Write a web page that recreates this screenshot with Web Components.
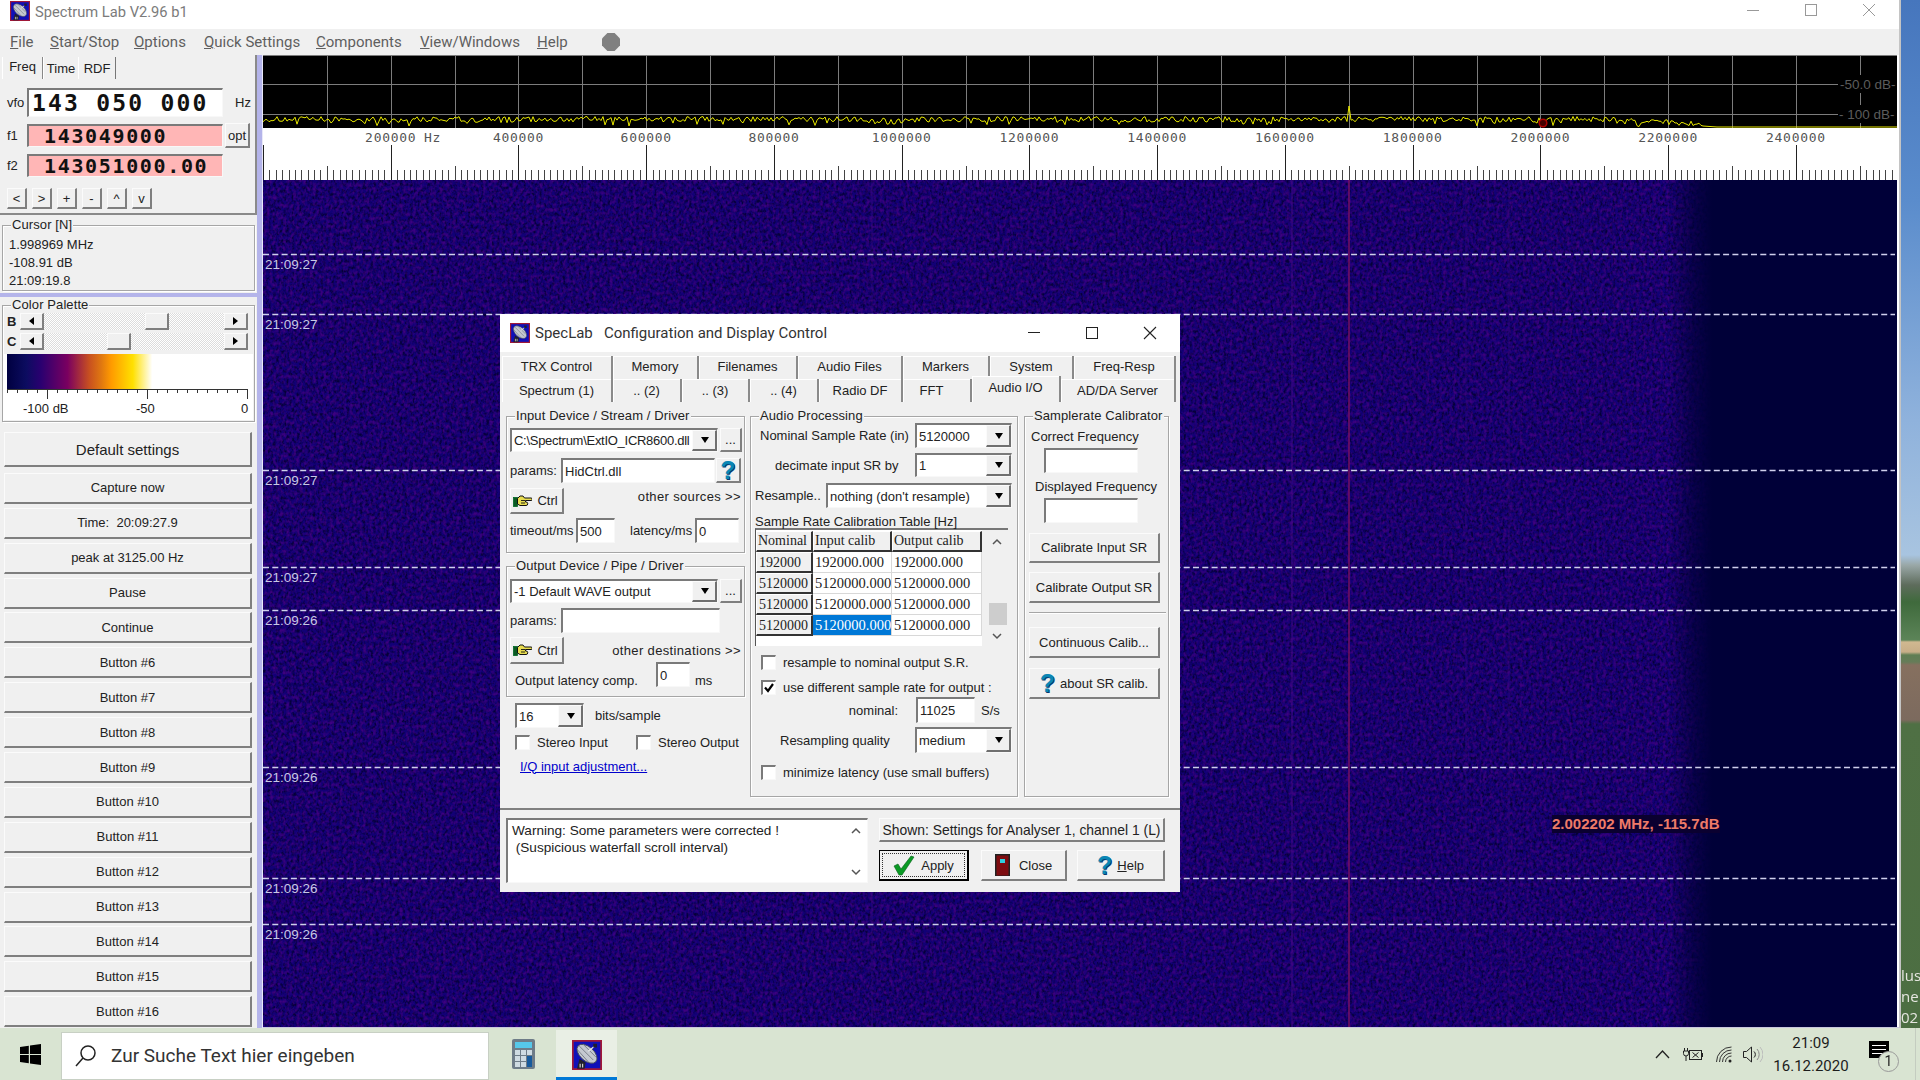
<!DOCTYPE html>
<html>
<head>
<meta charset="utf-8">
<title>Spectrum Lab</title>
<style>
  html, body { margin: 0; padding: 0; width: 1920px; height: 1080px; overflow: hidden; background: #000; }
</style>
</head>
<body>
<sl-app></sl-app>
<script>
'use strict';

(function() {
  const SANS = `'Liberation Sans', Arial, sans-serif`;
  const SEGOE = `Roboto, 'Noto Sans', sans-serif`;

  // shared bits for the shadow roots that hold lots of loose rows
  const ui = `
    * { box-sizing: border-box; }
    .row { display: flex; align-items: center; white-space: nowrap; }
    .push { margin-left: auto; }
    .q { font: bold 25px/22px ${SANS}; color: #0a86b4; text-shadow: 1px 1px 0 #063a70; }
  `;

  const APP_ICON = `<svg viewBox="0 0 24 24" width="100%" height="100%" style="display:block">
    <rect x=".7" y=".7" width="22.6" height="22.6" fill="#1010b8" stroke="#a01838" stroke-width="1.4"/>
    <ellipse cx="12" cy="11" rx="9.500" ry="5.600" transform="rotate(42 12 11)" fill="#c4c8d0" stroke="#444a58" stroke-width=".7"/>
    <path d="M6 5l11 11M4.500 8l9 10M9 3.500l10 10" stroke="#7c828c" stroke-width=".8"/>
    <path d="M13 9l5-4" stroke="#e8e8e8" stroke-width="1"/>
    <rect x="17" y="3" width="3" height="3" fill="#20202c"/>
    <path d="M6 15l-2 8h6l1-5z" fill="#20202c"/>
    <path d="M6.500 19v3M8.500 19v3" stroke="#d8d8d8" stroke-width=".9"/>
  </svg>`;

  const HAND = `<svg width="19" height="12" viewBox="0 0 19 12" style="margin-left:-2px">
    <rect x=".5" y="2.500" width="4" height="9" fill="#0a5a24" stroke="#062" stroke-width=".8"/>
    <path d="M4.500 3.500L7 1h3l1.500 2H18a1 1 0 0 1 0 2.500h-5.500V7h.5a1 1 0 0 1 0 3.500H7L4.500 9z" fill="#e8dc50" stroke="#111" stroke-width="1"/>
    <path d="M8 5.500h4M8 8h4" stroke="#111" stroke-width=".9"/>
  </svg>`;

  class SlBase extends HTMLElement {
    constructor() {
      super();
      this.attachShadow({ mode: 'open' }).innerHTML = this.render();
    }
  }

  // raised windows button
  class SlBtn extends SlBase {
    render() {
      return `<style>
        :host { display: inline-flex; align-items: center; justify-content: center; gap: 5px; box-sizing: border-box;
          background: #f0f0f0; border: solid; border-width: 1px 2px 2px 1px; border-color: #fbfbfb #7f7f7f #7f7f7f #fbfbfb;
          font: 13px ${SANS}; color: #222; white-space: nowrap; flex: none; }
      </style><slot></slot>`;
    }
  }

  // sunken white edit field
  class SlField extends SlBase {
    render() {
      return `<style>
        :host { display: inline-flex; align-items: center; box-sizing: border-box; background: #fff; flex: none;
          border: solid; border-width: 2px 1px 1px 2px; border-color: #7a7a7a #f8f8f8 #f8f8f8 #7a7a7a;
          padding-left: 2px; font: 13px ${SANS}; color: #222; white-space: nowrap; overflow: hidden; }
      </style><slot></slot>`;
    }
  }

  class SlCombo extends SlBase {
    render() {
      return `<style>
        :host { display: inline-flex; align-items: stretch; box-sizing: border-box; background: #fff; flex: none;
          border: solid; border-width: 2px 1px 1px 2px; border-color: #7a7a7a #f8f8f8 #f8f8f8 #7a7a7a;
          font: 13px ${SANS}; color: #222; white-space: nowrap; overflow: hidden; }
        .t { flex: 1; min-width: 0; overflow: hidden; align-self: center; padding-left: 2px; }
        .b { width: 20px; flex: none; background: #f0f0f0; border: solid; border-width: 1px 2px 2px 1px; padding-left: 2px;
          border-color: #fbfbfb #6f6f6f #6f6f6f #fbfbfb; display: flex; align-items: center; justify-content: center; }
        .b::after { content: ''; border: 4.5px solid transparent; border-top: 6px solid #000; border-bottom: 0; }
      </style><div class="t"><slot></slot></div><div class="b"></div>`;
    }
  }

  class SlCheck extends SlBase {
    render() {
      const on = this.hasAttribute('checked');
      return `<style>
        :host { display: inline-flex; align-items: center; gap: 7px; font: 13px ${SANS}; color: #222; white-space: nowrap; flex: none; }
        .box { width: 15px; height: 15px; flex: none; box-sizing: border-box; background: #fff;
          border: solid; border-width: 2px 1px 1px 2px; border-color: #7a7a7a #f8f8f8 #f8f8f8 #7a7a7a; }
        svg { display: block; }
      </style><div class="box">${on ? '<svg width="12" height="12" viewBox="0 0 12 12"><path d="M2 5.500l3 3.500 5-7" fill="none" stroke="#000" stroke-width="2.200"/></svg>' : ''}</div><slot></slot>`;
    }
  }

  // etched group box, the legend sits on the top edge
  class SlGroup extends SlBase {
    render() {
      return `<style>
        :host { display: block; position: relative; box-sizing: border-box; border: 1px solid #a6a6a6;
          box-shadow: inset 1px 1px 0 #fff, 1px 1px 0 #fff; font: 13px ${SANS}; color: #222; }
        .legend { position: absolute; top: -9px; left: 8px; padding: 0 1px; background: #f0f0f0; line-height: 16px; white-space: nowrap; letter-spacing: .1px; }
      </style><div class="legend"><slot name="legend"></slot></div><slot></slot>`;
    }
  }

  class SlScroll extends SlBase {
    render() {
      return `<style>
        :host { display: flex; height: 17px; flex: none; box-sizing: border-box; }
        .a { width: 21px; flex: none; background: #f0f0f0; border: solid; border-width: 1px 2px 2px 1px;
          border-color: #fbfbfb #7f7f7f #7f7f7f #fbfbfb; display: flex; align-items: center; justify-content: center; }
        .l::after { content: ''; border: 4px solid transparent; border-right: 5px solid #000; border-left: 0; }
        .r::after { content: ''; border: 4px solid transparent; border-left: 5px solid #000; border-right: 0; }
        .track { flex: 1; background: repeating-conic-gradient(#fff 0 25%, #dcdcdc 0 50%) 0 0 / 2px 2px; display: flex; }
        .gap { flex: none; width: var(--pos, 0); }
        .thumb { width: 21px; background: #f0f0f0; border: solid; border-width: 1px 2px 2px 1px; border-color: #fbfbfb #7f7f7f #7f7f7f #fbfbfb; }
      </style><div class="a l"></div><div class="track"><div class="gap"></div><div class="thumb"></div></div><div class="a r"></div>`;
    }
  }

  class SlTitle extends SlBase {
    render() {
      return `<style>
        :host { display: flex; align-items: center; height: 29px; background: #fff; flex: none; }
        .icon { width: 20px; height: 20px; margin: -8px 0 0 10px; }
        .txt { margin: -6px 0 0 5px; font: 14.700px ${SEGOE}; color: #7b7b7b; }
        .ctl { margin: -9px 0 0 auto; display: flex; }
        .ctl div { width: 58px; display: flex; justify-content: center; }
      </style>
      <div class="icon">${APP_ICON}</div>
      <div class="txt">Spectrum Lab V2.96 b1</div>
      <div class="ctl">
        <div><svg width="14" height="14"><path d="M1 7.500h12" stroke="#999"/></svg></div>
        <div><svg width="14" height="14"><rect x="1.500" y="1.500" width="11" height="11" fill="none" stroke="#999"/></svg></div>
        <div style="margin-right:1px"><svg width="14" height="14"><path d="M1 1l12 12M13 1L1 13" stroke="#999"/></svg></div>
      </div>`;
    }
  }

  class SlMenu extends SlBase {
    render() {
      const items = [['F', 'ile', 40], ['S', 'tart/Stop', 84], ['O', 'ptions', 70], ['Q', 'uick Settings', 112], ['C', 'omponents', 104], ['V', 'iew/Windows', 117], ['H', 'elp', 65]];
      return `<style>
        :host { display: flex; align-items: center; height: 26px; background: #f0f0f0; padding-left: 10px; flex: none;
          font: 15px ${SEGOE}; color: #5f5f5f; }
        span { display: block; white-space: nowrap; flex: none; }
        .dot { width: 18px; height: 18px; background: #808080; clip-path: polygon(30% 0, 70% 0, 100% 30%, 100% 70%, 70% 100%, 30% 100%, 0 70%, 0 30%); }
      </style>
      ${items.map(i => `<span style="width:${i[2]}px"><u>${i[0]}</u>${i[1]}</span>`).join('')}
      <div class="dot"></div>`;
    }
  }

  class SlSidePanel extends SlBase {
    render() {
      const labels = ['Capture now', 'Time:&nbsp; 20:09:27.9', 'peak at 3125.00 Hz', 'Pause', 'Continue'];
      for (let i = 6; i <= 16; i++) labels.push('Button #' + i);
      const small = ['&lt;', '&gt;', '+', '-', '^', 'v'];
      let ticks = '<path d="M7 .500H248" stroke="#333"/>';
      for (let x = 0; x <= 240; x += 10) {
        ticks += `<path d="M${x + 7.5} 0v4" stroke="#333"/>`;
      }
      [47.500, 147.500, 247.500].forEach(p => { ticks += `<path d="M${p} 0v10" stroke="#333"/>`; });
      return `<style>
        ${ui}
        :host { display: flex; flex-direction: column; width: 257px; flex: none; background: #f0f0f0; font: 13px ${SANS}; color: #222; }
        .freq { height: 160px; border: solid; border-width: 0 2px 2px 0; border-color: #8a8a8a; flex: none; }
        .tabs { display: flex; height: 24px; padding: 2px 0 0 3px; align-items: stretch; }
        .tab { padding-top: 4px; text-align: center; border-right: 1px solid #777; box-shadow: -1px 0 0 #fff; }
        .tab.on { padding-top: 2px; background: #f0f0f0; border-right: 2px solid #888; }
        .lbl { width: 27px; padding-left: 7px; flex: none; }
        .mono { font-family: 'DejaVu Sans Mono', monospace; font-weight: bold; color: #111; }
        .big { font-size: 23px; letter-spacing: 2.200px; }
        .pink { background: #ffb6b6; font-size: 20px; letter-spacing: 1.650px; padding-left: 15px; }
        .small { width: 20px; height: 21px; margin-right: 5px; font-size: 13px; }
        .lines { padding: 10px 0 0 6px; line-height: 18px; }
        .split { height: 4px; margin-top: 2px; background: #b4b4ea; flex: none; }
        .bar { margin-top: 3px; padding-left: 4px; }
        .bar b { width: 13px; flex: none; }
        .bar sl-scroll { width: 228px; }
        .scale { margin: 4px 1px 0; background: #fff; height: 66px; }
        .grad { margin-left: 3px; width: 242px; height: 35px; background: linear-gradient(90deg, #000040 0, #0c0c60 8%, #2a0070 14%, #7a0060 25%, #c85020 34%, #e07810 39%, #ff9a00 43%, #ffe000 52%, #fff 60%); }
        svg { display: block; }
        .stack { display: flex; flex-direction: column; gap: 3.900px; margin: 10px 0 0 4px; }
        .stack sl-btn { width: 248px; height: 31px; }
      </style>
      <div class="freq">
        <div class="tabs">
          <div class="tab on" style="width:41px">Freq</div>
          <div class="tab" style="width:35px">Time</div>
          <div class="tab" style="width:37px">RDF</div>
        </div>
        <div class="row" style="height:29px;margin-top:9px">
          <div class="lbl">vfo</div>
          <sl-field class="mono big" style="width:196px;height:29px;padding-left:3px">143 050 000</sl-field>
          <span style="margin-left:12px">Hz</span>
        </div>
        <div class="row" style="height:23px;margin-top:7px">
          <div class="lbl">f1</div>
          <sl-field class="mono pink" style="width:196px;height:23px">143049000</sl-field>
          <sl-btn style="width:25px;height:25px;margin-left:2px">opt</sl-btn>
        </div>
        <div class="row" style="height:23px;margin-top:7px">
          <div class="lbl">f2</div>
          <sl-field class="mono pink" style="width:196px;height:23px">143051000.00</sl-field>
        </div>
        <div class="row" style="margin:11px 0 0 7px">
          ${small.map(s => `<sl-btn class="small">${s}</sl-btn>`).join('')}
        </div>
      </div>
      <sl-group style="margin:10px 0 0 2px;width:253px;height:66px">
        <span slot="legend">Cursor [N]</span>
        <div class="lines">1.998969 MHz<br>-108.91 dB<br>21:09:19.8</div>
      </sl-group>
      <div class="split"></div>
      <sl-group style="margin:8px 0 0 2px;width:253px;height:117px">
        <span slot="legend">Color Palette</span>
        <div class="row bar" style="margin-top:7px"><b>B</b><sl-scroll style="--pos:101px"></sl-scroll></div>
        <div class="row bar"><b>C</b><sl-scroll style="--pos:63px"></sl-scroll></div>
        <div class="scale">
          <div class="grad"></div>
          <svg width="249" height="31" style="margin-left:-4px">
            ${ticks}
            <g font-family="${SANS.replace(/'/g, '')}" font-size="13" fill="#222">
              <text x="23" y="24">-100 dB</text>
              <text x="136" y="24">-50</text>
              <text x="241" y="24">0</text>
            </g>
          </svg>
        </div>
      </sl-group>
      <div class="stack">
        <sl-btn style="height:35px;font-size:15px;margin-bottom:2px">Default settings</sl-btn>
        ${labels.map(l => `<sl-btn>${l}</sl-btn>`).join('')}
      </div>`;
    }
  }

  const HZ = 63.87;
  const SPEC_LEFT = 263;

  class SlSpectrum extends SlBase {
    render() {
      let seed = 1234;
      const rnd = () => { seed = (seed * 16807) % 2147483647; return seed / 2147483647; };
      let grid = '';
      for (let i = 1; i <= 25; i++) {
        const x = Math.round(SPEC_LEFT + i * HZ) + 0.5;
        grid += `<path d="M${x} 55v73" stroke="#7c7c7c"/>`;
      }
      let pts = '';
      for (let x = SPEC_LEFT; x < 1705; x += 2) {
        let y = 122 - rnd() * 5.500 + (rnd() < 0.12 ? 4 : 0);
        if (x > 1600) y += (x - 1600) * 0.045;
        if (x === 1349) y = 106;
        pts += `${x},${y.toFixed(1)} `;
      }
      pts += '1717,127 1897,127';
      return `<style>
        :host { display: block; height: 73px; flex: none; }
        svg { display: block; }
      </style>
      <svg width="1634" height="73" viewBox="263 55 1634 73">
        <rect x="263" y="55" width="1634" height="73" fill="#000"/>
        ${grid}
        <path d="M263 55.500h1634M263 84.500h1634M263 114.500h1634" stroke="#7c7c7c"/>
        <rect x="1838" y="75" width="59" height="18" fill="#000"/>
        <rect x="1838" y="105" width="59" height="18" fill="#000"/>
        <g font-family="Liberation Sans, sans-serif" font-size="13.500" fill="#5c5c5c">
          <text x="1840" y="89">-50.0 dB-</text>
          <text x="1839" y="119">- 100 dB-</text>
        </g>
        <polyline points="${pts}" fill="none" stroke="#e6e600" stroke-width="1"/>
        <circle cx="1543" cy="123" r="3.800" fill="#400" stroke="#b00000" stroke-width="1.500"/>
      </svg>`;
    }
  }

  class SlScale extends SlBase {
    render() {
      let ticks = '';
      for (let i = 0; i <= 255; i++) {
        const x = Math.round(SPEC_LEFT + i * HZ / 10) + 0.5;
        if (x > 1893) break;
        const top = i % 20 === 0 ? 145 : i % 10 === 0 ? 166 : 170;
        ticks += `<path d="M${x} ${top}V180" stroke="${i % 20 === 0 ? '#222' : '#444'}"/>`;
      }
      let labels = '';
      for (let i = 1; i <= 12; i++) {
        const x = SPEC_LEFT + i * 2 * HZ;
        labels += `<text x="${x.toFixed(1)}" y="142" text-anchor="middle">${i * 200000}</text>`;
      }
      return `<style>
        :host { display: block; height: 52px; flex: none; }
        svg { display: block; }
      </style>
      <svg width="1634" height="52" viewBox="263 128 1634 52">
        <rect x="263" y="128" width="1634" height="52" fill="#fff"/>
        ${ticks}
        <g font-family="DejaVu Sans Mono, monospace" font-size="13" letter-spacing=".7" fill="#555">
          ${labels}
          <text x="424" y="142">Hz</text>
        </g>
      </svg>`;
    }
  }

  class SlWaterfall extends SlBase {
    render() {
      const lines = [[254, '27'], [314, '27'], [470, '27'], [567, '27'], [610, '26'], [767, '26'], [878, '26'], [924, '26']];
      const streaks = [[1349, '#7a1060', .9, 1.6], [1292, '#4a0a88', .6, 1.4], [872, '#3c0a80', .45, 1.4], [1466, '#340a80', .4, 1.4], [1509, '#3c0a80', .4, 1.4], [1130, '#2a0878', .3, 1.4], [640, '#2a0878', .3, 1.4]];
      return `<style>
        :host { display: block; flex: 1; min-height: 0; border-bottom: 1px solid #c8c8dc; }
        svg { display: block; }
      </style>
      <svg width="1634" height="847" viewBox="263 180 1634 847">
        <defs>
          <filter id="dark" x="0" y="0" width="100%" height="100%" color-interpolation-filters="sRGB">
            <feTurbulence type="fractalNoise" baseFrequency=".38 .3" numOctaves="2" seed="4"/>
            <feColorMatrix values="0 0 0 0 .02  0 0 0 0 0  0 0 0 0 .22  2.800 0 0 0 -1.150"/>
          </filter>
          <filter id="warm" x="0" y="0" width="100%" height="100%" color-interpolation-filters="sRGB">
            <feTurbulence type="fractalNoise" baseFrequency=".3 .24" numOctaves="2" seed="9"/>
            <feColorMatrix values="0 0 0 0 .24  0 0 0 0 0  0 0 0 0 .5  0 2.600 0 0 -1.100"/>
          </filter>
          <linearGradient id="edge" x1="1668" x2="1712" y1="0" y2="0" gradientUnits="userSpaceOnUse">
            <stop offset="0" stop-color="#000038" stop-opacity="0"/>
            <stop offset=".6" stop-color="#000038" stop-opacity=".7"/>
            <stop offset="1" stop-color="#000038"/>
          </linearGradient>
        </defs>
        <rect x="263" y="180" width="1634" height="847" fill="#120076"/>
        <rect x="263" y="180" width="1634" height="847" filter="url(#dark)"/>
        <rect x="263" y="180" width="1634" height="847" filter="url(#warm)"/>
        ${streaks.map(s => `<path d="M${s[0]} 180v847" stroke="${s[1]}" stroke-opacity="${s[2]}" stroke-width="${s[3]}"/>`).join('')}
        <rect x="1668" y="180" width="229" height="847" fill="url(#edge)"/>
        <g stroke="#cfcfec" stroke-width="1.500" stroke-dasharray="6 3.300">
          ${lines.map(l => `<path d="M263 ${l[0] + 0.5}H1895"/>`).join('')}
        </g>
        <g font-family="Liberation Sans, sans-serif" font-size="13.500" fill="#c8c8e6">
          ${lines.map(l => `<text x="265" y="${l[0] + 15}">21:09:${l[1]}</text>`).join('')}
        </g>
        <rect x="1552" y="815" width="168" height="18" fill="#0a0030"/>
        <text x="1552" y="829" font-family="Liberation Sans, sans-serif" font-weight="bold" font-size="15" fill="#ee7a68">2.002202 MHz, -115.7dB</text>
      </svg>`;
    }
  }

  class SlCalTable extends SlBase {
    render() {
      const rows = [['192000', '192000.000', '192000.000'], ['5120000', '5120000.000', '5120000.000'], ['5120000', '5120000.000', '5120000.000'], ['5120000', '5120000.000', '5120000.000']];
      return `<style>
        * { box-sizing: border-box; }
        :host { display: flex; width: 253px; height: 118px; flex: none; border-top: 2px solid #777; border-left: 1px solid #555;
          font: 14.500px 'Liberation Serif', serif; color: #222; background: #f0f0f0; }
        .grid { width: 226px; height: 116px; background: #fff; padding-top: 1px; display: grid; grid-template-columns: 57px 79px 90px; grid-auto-rows: 21px; align-content: start; }
        .c { overflow: hidden; white-space: nowrap; padding-left: 2px; line-height: 20px; border: solid; border-width: 0 1px 1px 0; border-color: #d8d8d8; }
        .h { background: #f0f0f0; border-color: #333; border-width: 1px 2px 2px 1px; border-top-color: #fff; border-left-color: #fff; line-height: 18px; font-size: 14px; padding-left: 1px; }
        .sel { background: #0078d7; color: #fff; }
        .sb { flex: 1; }
        .sb svg { display: block; margin: 8px 0 0 10px; }
        .th { width: 18px; height: 22px; margin: 57px 0 0 7px; background: #cdcdcd; }
      </style>
      <div class="grid">
        <div class="c h">Nominal</div><div class="c h">Input calib</div><div class="c h">Output calib</div>
        ${rows.map((r, i) => `<div class="c h" style="line-height:19px;padding-left:2px;font-size:14px">${r[0]}</div><div class="c${i === 3 ? ' sel' : ''}">${r[1]}</div><div class="c">${r[2]}</div>`).join('')}
      </div>
      <div class="sb">
        <svg width="10" height="8"><path d="M1 6l4-4 4 4" fill="none" stroke="#555" stroke-width="1.500"/></svg>
        <div class="th"></div>
        <svg width="10" height="8" style="margin-top:7px"><path d="M1 2l4 4 4-4" fill="none" stroke="#555" stroke-width="1.500"/></svg>
      </div>`;
    }
  }

  class SlDialog extends SlBase {
    render() {
      const tabs1 = [['TRX Control', 111], ['Memory', 86], ['Filenames', 99], ['Audio Files', 105], ['Markers', 87], ['System', 84], ['Freq-Resp', 102]];
      const tabs2 = [['Spectrum (1)', 111], ['.. (2)', 69], ['.. (3)', 68], ['.. (4)', 69], ['Radio DF', 84], ['<span style="margin-right:10px">FFT</span>', 69], ['Audio I/O', 89, 1], ['AD/DA Server', 115]];
      const tab = t => `<div class="tab${t[2] ? ' on' : ''}" style="width:${t[1]}px">${t[0]}</div>`;
      return `<style>
        ${ui}
        :host { position: absolute; left: 500px; top: 314px; width: 680px; height: 578px; display: flex; flex-direction: column;
          background: #f0f0f0; font: 13px ${SANS}; color: #222; }
        .title { height: 38px; background: #fff; display: flex; align-items: center; flex: none; padding-left: 10px; font: 15px ${SEGOE}; color: #333; }
        .title .i { width: 20px; height: 20px; margin-right: 5px; }
        .title pre { margin: 0; font: inherit; }
        .ctl { margin-left: auto; display: flex; }
        .ctl div { width: 58px; display: flex; justify-content: center; }
        .tabs { display: flex; padding-left: 2px; height: 23px; flex: none; align-items: flex-end; }
        .t1 { margin-top: 4px; height: 23px; }
        .t2 { height: 23px; }
        .tab { height: 100%; text-align: center; line-height: 23px; border-right: 2px solid #8a8a8a; box-shadow: inset 1px 1px 0 #fff; white-space: nowrap; }
        .t1 .tab { line-height: 22px; }
        .on { height: 26px; margin-top: -3px; line-height: 23px; background: #f0f0f0; position: relative; }
        .page { display: flex; height: 406px; flex: none; padding: 14px 0 0 6px; }
        .c1 { width: 239px; flex: none; }
        .c2 { width: 268px; margin-left: 5px; flex: none; }
        .c3 { width: 145px; margin-left: 6px; flex: none; }
        sl-group { width: 100%; }
        .pad { padding: 0 3px; }
        .link { color: #0000cc; text-decoration: underline; }
        .wide { letter-spacing: .35px; }
        .sep { height: 2px; background: #808080; flex: none; }
        .foot { display: flex; padding: 8px 0 0 6px; font-size: 13.600px; }
        .warn { position: relative; width: 362px; height: 65px; align-items: flex-start; flex-direction: column; display: flex; padding: 2px 0 0 4px; line-height: 17px; font-size: 13.600px; }
        .warn svg { position: absolute; right: 6px; }
        .r { width: 286px; margin-left: 11px; flex: none; }
        .apply { border-color: #000; padding: 2px; }
        .focus { display: flex; align-items: center; justify-content: center; gap: 6px; width: 100%; height: 100%; border: 1px dotted #333; }
      </style>
      <div class="title">
        <div class="i">${APP_ICON}</div>
        <pre>SpecLab   Configuration and Display Control</pre>
        <div class="ctl">
          <div><svg width="14" height="14"><path d="M1 6.500h12" stroke="#222"/></svg></div>
          <div><svg width="14" height="14"><rect x="1.500" y="1.500" width="11" height="11" fill="none" stroke="#222"/></svg></div>
          <div style="margin-right:1px"><svg width="14" height="14"><path d="M1 1l12 12M13 1L1 13" stroke="#222" stroke-width="1.100"/></svg></div>
        </div>
      </div>
      <div class="tabs t1">${tabs1.map(tab).join('')}</div>
      <div class="tabs t2">${tabs2.map(tab).join('')}</div>

      <div class="page">
        <div class="c1">
          <sl-group class="pad" style="height:137px">
            <span slot="legend">Input Device / Stream / Driver</span>
            <div class="row" style="margin-top:11px;height:24px;gap:2px">
              <sl-combo style="width:208px;height:24px;letter-spacing:-.28px">C:\\Spectrum\\ExtIO_ICR8600.dll</sl-combo>
              <sl-btn style="width:22px;height:24px">...</sl-btn>
            </div>
            <div class="row" style="margin-top:6px;height:25px">
              <span style="width:51px">params:</span>
              <sl-field style="width:154px;height:25px">HidCtrl.dll</sl-field>
              <sl-btn style="width:25px;height:25px;margin-left:1px"><span class="q">?</span></sl-btn>
            </div>
            <div class="row" style="margin-top:5px;height:26px">
              <sl-btn style="width:54px;height:26px">${HAND}Ctrl</sl-btn>
              <span class="push wide" style="margin-top:-10px">other sources &gt;&gt;</span>
            </div>
            <div class="row" style="margin-top:4px;height:25px">
              <span style="width:66px">timeout/ms</span>
              <sl-field style="width:39px;height:25px">500</sl-field>
              <span style="margin-left:15px;width:65px">latency/ms</span>
              <sl-field style="width:44px;height:25px">0</sl-field>
            </div>
          </sl-group>
          <sl-group class="pad" style="height:131px;margin-top:13px">
            <span slot="legend">Output Device / Pipe / Driver</span>
            <div class="row" style="margin-top:12px;height:24px;gap:2px">
              <sl-combo style="width:208px;height:24px">-1 Default WAVE output</sl-combo>
              <sl-btn style="width:22px;height:24px">...</sl-btn>
            </div>
            <div class="row" style="margin-top:5px;height:25px">
              <span style="width:51px">params:</span>
              <sl-field style="width:159px;height:25px"></sl-field>
            </div>
            <div class="row" style="margin-top:4px;height:25px;align-items:flex-start">
              <sl-btn style="width:54px;height:27px">${HAND}Ctrl</sl-btn>
              <span class="push wide" style="margin-top:6px">other destinations &gt;&gt;</span>
            </div>
            <div class="row" style="height:25px;padding-left:5px">
              <span style="width:141px;margin-top:11px">Output latency comp.</span>
              <sl-field style="width:34px;height:25px">0</sl-field>
              <span style="margin:11px 0 0 5px">ms</span>
            </div>
          </sl-group>
          <div class="row" style="margin:6px 0 0 9px;height:25px">
            <sl-combo style="width:69px;height:25px">16</sl-combo>
            <span style="margin-left:11px">bits/sample</span>
          </div>
          <div class="row" style="margin:7px 0 0 9px;height:15px">
            <sl-check style="width:121px">Stereo Input</sl-check>
            <sl-check>Stereo Output</sl-check>
          </div>
          <div class="row link" style="margin:8px 0 0 14px;height:16px">I/Q input adjustment...</div>
        </div>

        <div class="c2">
          <sl-group style="height:381px;padding-left:4px">
            <span slot="legend">Audio Processing</span>
            <div class="row" style="margin-top:6px;height:25px">
              <span style="width:160px;padding-left:5px">Nominal Sample Rate (in)</span>
              <sl-combo style="width:97px;height:25px">5120000</sl-combo>
            </div>
            <div class="row" style="margin-top:5px;height:24px">
              <span style="width:160px;padding-left:20px">decimate input SR by</span>
              <sl-combo style="width:97px;height:24px">1</sl-combo>
            </div>
            <div class="row" style="margin-top:6px;height:25px">
              <span style="width:71px">Resample..</span>
              <sl-combo style="width:186px;height:25px">nothing (don't resample)</sl-combo>
            </div>
            <div class="row" style="margin-top:5px;height:16px">Sample Rate Calibration Table [Hz]</div>
            <sl-cal-table style="margin-top:-1px"></sl-cal-table>
            <div class="row" style="margin:9px 0 0 6px;height:15px"><sl-check>resample to nominal output S.R.</sl-check></div>
            <div class="row" style="margin:10px 0 0 6px;height:15px"><sl-check checked>use different sample rate for output :</sl-check></div>
            <div class="row" style="margin-top:2px;height:26px">
              <span style="width:143px;text-align:right">nominal:</span>
              <sl-field style="width:59px;height:26px;margin-left:18px">11025</sl-field>
              <span style="margin-left:6px">S/s</span>
            </div>
            <div class="row" style="margin-top:4px;height:26px">
              <span style="width:160px;padding-left:25px">Resampling quality</span>
              <sl-combo style="width:97px;height:26px">medium</sl-combo>
            </div>
            <div class="row" style="margin:12px 0 0 6px;height:15px"><sl-check>minimize latency (use small buffers)</sl-check></div>
          </sl-group>
        </div>

        <div class="c3">
          <sl-group style="height:381px">
            <span slot="legend">Samplerate Calibrator</span>
            <div class="row" style="margin:11px 0 0 6px;height:16px">Correct Frequency</div>
            <sl-field style="display:flex;margin:4px 0 0 19px;width:94px;height:25px"></sl-field>
            <div class="row" style="margin:5px 0 0 10px;height:16px">Displayed Frequency</div>
            <sl-field style="display:flex;margin:4px 0 0 19px;width:94px;height:25px"></sl-field>
            <sl-btn style="display:flex;margin:10px 0 0 4px;width:131px;height:30px">Calibrate Input SR</sl-btn>
            <sl-btn style="display:flex;margin:9px 0 0 4px;width:131px;height:31px">Calibrate Output SR</sl-btn>
            <div style="margin:9px 2px 0 4px;height:2px;border-top:1px solid #a6a6a6;border-bottom:1px solid #fff"></div>
            <sl-btn style="display:flex;margin:13px 0 0 4px;width:131px;height:31px">Continuous Calib...</sl-btn>
            <sl-btn style="display:flex;margin:10px 0 0 4px;width:131px;height:31px"><span class="q">?</span>about SR calib.</sl-btn>
          </sl-group>
        </div>
      </div>

      <div class="sep"></div>
      <div class="foot">
        <sl-field class="warn">
          <span>Warning: Some parameters were corrected !</span>
          <span>&nbsp;(Suspicious waterfall scroll interval)</span>
          <svg width="10" height="8" style="top:7px"><path d="M1 6l4-4 4 4" fill="none" stroke="#555" stroke-width="1.500"/></svg>
          <svg width="10" height="8" style="top:48px"><path d="M1 2l4 4 4-4" fill="none" stroke="#555" stroke-width="1.500"/></svg>
        </sl-field>
        <div class="r">
          <sl-btn style="display:flex;width:286px;height:24px;font-size:13.900px">Shown: Settings for Analyser 1, channel 1 (L)</sl-btn>
          <div class="row" style="margin-top:8px">
            <sl-btn class="apply" style="width:90px;height:31px"><div class="focus">
              <svg width="22" height="21" viewBox="0 0 22 21"><path d="M1 11l4-2 3 5L18 1l3 1L9 20H6z" fill="#0a9a24" stroke="#06601a" stroke-width=".6"/></svg>Apply</div></sl-btn>
            <sl-btn style="width:86px;height:31px;margin-left:12px;gap:9px">
              <svg width="15" height="22" viewBox="0 0 15 22"><rect width="15" height="22" fill="#222"/><rect x="1.500" y="1.500" width="12" height="20" fill="#7e0c10"/><rect x="5" y="5" width="5" height="4" fill="#2fd0e0"/></svg>Close</sl-btn>
            <sl-btn style="width:88px;height:31px;margin-left:10px"><span class="q">?</span><span><u>H</u>elp</span></sl-btn>
          </div>
        </div>
      </div>`;
    }
  }

  class SlTaskbar extends SlBase {
    render() {
      return `<style>
        * { box-sizing: border-box; }
        :host { display: flex; align-items: center; height: 52px; flex: none; background: #d9e4d2; color: #1c1c1c; font: 15px ${SEGOE}; }
        svg { display: block; flex: none; }
        .start { width: 50px; padding-left: 20px; }
        .search { width: 428px; height: 48px; margin: 3px 0 0 11px; background: #fff; border: 1px solid #c8d0c4; display: flex; align-items: center; padding-left: 13px; font-size: 19px; color: #333; }
        .search svg { margin-right: 14px; }
        .calc { margin-left: 23px; }
        .app { width: 61px; height: 50px; margin: 2px 0 0 21px; background: #e9efe5; border-bottom: 3px solid #0078d7; display: flex; align-items: center; justify-content: center; }
        .app div { width: 30px; height: 30px; margin-top: 3px; }
        .tray { margin-left: auto; display: flex; align-items: center; height: 100%; padding-right: 14px; border-right: 1px solid #c4ccc0; margin-right: 4px; }
        .clock { width: 90px; margin: 2px 0 0 3px; text-align: center; line-height: 23px; font-size: 15px; }
        .note { position: relative; width: 32px; height: 36px; margin-left: 13px; }
        .note svg { position: absolute; left: 0; top: 5px; }
        .badge { position: absolute; left: 9px; top: 15px; width: 21px; height: 21px; border-radius: 50%; background: #d9e4d2; border: 1.500px solid #999; text-align: center; line-height: 18px; font-size: 14px; }
      </style>
      <div class="start"><svg width="21" height="21" viewBox="0 0 21 21"><path d="M0 3l8.800-1.300v8.200H0zM10 1.500L21 0v9.900H10zM0 11.100h8.800v8.200L0 18zM10 11.100h11V21l-11-1.500z" fill="#000"/></svg></div>
      <div class="search">
        <svg width="22" height="24" viewBox="0 0 22 24"><circle cx="13" cy="9" r="7" fill="none" stroke="#222" stroke-width="1.500"/><path d="M8 14l-7 8" stroke="#222" stroke-width="1.500"/></svg>
        Zur Suche Text hier eingeben
      </div>
      <svg class="calc" width="23" height="30" viewBox="0 0 23 30">
        <rect width="23" height="30" rx="2" fill="#6e7c88"/>
        <rect x="3" y="3" width="17" height="6" fill="#56c8ea"/>
        <path d="M3 11h5v5H3zM9 11h5v5H9zM15 11h5v5h-5zM3 17h5v5H3zM9 17h5v5H9zM3 23h5v5H3zM9 23h5v5H9z" fill="#cfdbe2"/>
        <rect x="15" y="17" width="5" height="11" fill="#175a9c"/>
      </svg>
      <div class="app"><div>${APP_ICON}</div></div>
      <div class="tray">
        <svg width="15" height="9" viewBox="0 0 15 9"><path d="M1 8l6.500-7L14 8" fill="none" stroke="#222" stroke-width="1.300"/></svg>
        <svg width="20" height="15" viewBox="0 0 20 15" style="margin-left:13px" fill="none" stroke="#222"><path d="M1.500 1v3M4.500 1v3M.500 4h5v2.500a2.500 2.500 0 0 1-5 0zM3 9v5"/><rect x="6.500" y="3.500" width="12" height="9"/><path d="M19.500 6v4M9.500 5.500l6 5M15.500 5.500l-6 5"/></svg>
        <svg width="17" height="17" viewBox="0 0 17 17" style="margin-left:13px" fill="none" stroke="#333"><path d="M.500 16A15 15 0 0 1 15.500 1M3.500 16A12 12 0 0 1 15.500 4M6.500 16A9 9 0 0 1 15.500 7M9.500 16a6 6 0 0 1 6-6"/><circle cx="14" cy="15" r="1.500" fill="#222" stroke="none"/></svg>
        <svg width="20" height="17" viewBox="0 0 20 17" style="margin-left:10px" fill="none" stroke="#222"><path d="M.500 5.500h3l5-4.500v15l-5-4.500h-3z"/><path d="M11 5.500a4 4 0 0 1 0 6"/><path d="M14 3a8 8 0 0 1 0 11" stroke="#888"/><path d="M17 1a11 11 0 0 1 0 15" stroke="#bbb"/></svg>
        <div class="clock">21:09<br>16.12.2020</div>
        <div class="note">
          <svg width="20" height="17" viewBox="0 0 20 17"><rect width="20" height="17" fill="#000"/><path d="M3 4.500h14M3 8.500h14M3 12.500h14" stroke="#fff"/></svg>
          <div class="badge">1</div>
        </div>
      </div>`;
    }
  }

  class SlWallpaper extends SlBase {
    render() {
      return `<style>
        :host { display: flex; flex-direction: column; justify-content: flex-end; width: 21px; flex: none; overflow: hidden;
          background: linear-gradient(180deg, #4676bd 0, #5a8ccc 200px, #8fb2dc 420px, #a8c4e0 555px, #9aa8a8 565px, #5e6c5c 585px, #3f6a3c 602px, #5c8458 640px, #d0b890 642px, #c8ae88 652px, #607e54 655px, #667c58 662px, #86705f 665px, #7c6a5e 720px, #4f7044 724px, #4c6e42 1028px);
          font: 15px 'Open Sans', sans-serif; color: #e6e6e0; }
        div { white-space: nowrap; text-align: left; line-height: 21px; }
      </style>
      <div>lus</div><div>ne</div><div>02</div>`;
    }
  }

  class SlApp extends SlBase {
    render() {
      return `<style>
        :host { display: flex; flex-direction: column; width: 1920px; height: 1080px; filter: blur(.35px); }
        .top { display: flex; height: 1028px; flex: none; position: relative; }
        .win { width: 1899px; flex: none; display: flex; flex-direction: column; border-right: 2px solid #c4c4c4; background: #fff; }
        .body { display: flex; flex: 1; min-height: 0; }
        .split { width: 6px; flex: none; background: linear-gradient(90deg, #b4b4ea 5px, #e8e8f8 5px); }
        .disp { flex: 1; display: flex; flex-direction: column; min-width: 0; }
      </style>
      <div class="top">
        <div class="win">
          <sl-title></sl-title>
          <sl-menu></sl-menu>
          <div class="body">
            <sl-side-panel></sl-side-panel>
            <div class="split"></div>
            <div class="disp">
              <sl-spectrum></sl-spectrum>
              <sl-scale></sl-scale>
              <sl-waterfall></sl-waterfall>
            </div>
          </div>
        </div>
        <sl-wallpaper></sl-wallpaper>
        <sl-dialog></sl-dialog>
      </div>
      <sl-taskbar></sl-taskbar>`;
    }
  }

  customElements.define('sl-btn', SlBtn);
  customElements.define('sl-field', SlField);
  customElements.define('sl-combo', SlCombo);
  customElements.define('sl-check', SlCheck);
  customElements.define('sl-group', SlGroup);
  customElements.define('sl-scroll', SlScroll);
  customElements.define('sl-title', SlTitle);
  customElements.define('sl-menu', SlMenu);
  customElements.define('sl-side-panel', SlSidePanel);
  customElements.define('sl-spectrum', SlSpectrum);
  customElements.define('sl-scale', SlScale);
  customElements.define('sl-waterfall', SlWaterfall);
  customElements.define('sl-cal-table', SlCalTable);
  customElements.define('sl-dialog', SlDialog);
  customElements.define('sl-taskbar', SlTaskbar);
  customElements.define('sl-wallpaper', SlWallpaper);
  customElements.define('sl-app', SlApp);
})();
</script>
</body>
</html>
